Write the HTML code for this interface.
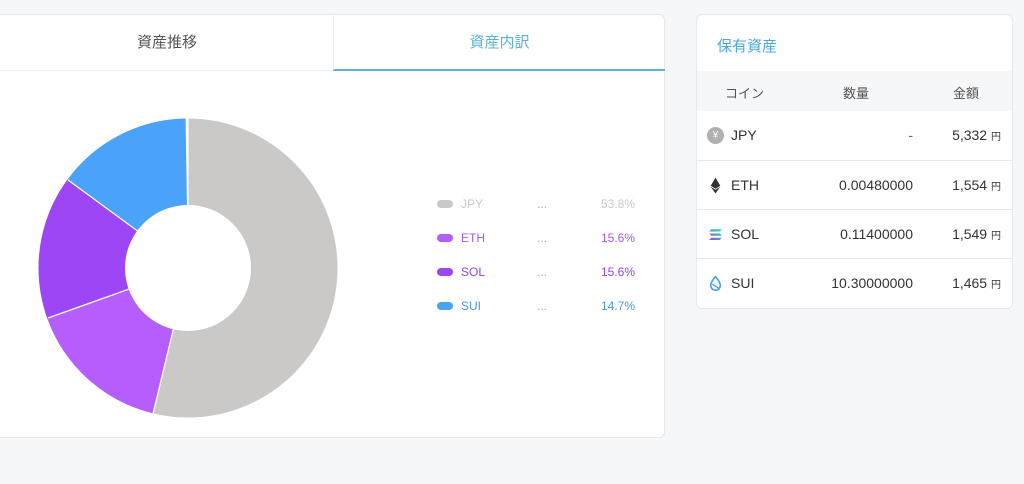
<!DOCTYPE html>
<html><head><meta charset="utf-8"><style>
*{margin:0;padding:0;box-sizing:border-box}
body{width:1024px;height:484px;background:#f6f7f9;font-family:"Liberation Sans","Noto Sans CJK JP",sans-serif;position:relative;overflow:hidden;color:#333}
.card{position:absolute;background:#fff;border:1px solid #e6e8eb;border-radius:6px}
.tab{position:absolute;top:0;height:56px;line-height:56px;text-align:center;font-size:15px}
.leg{position:absolute;left:437px;font-size:12px;width:200px;height:14px;line-height:14px}
.leg i{position:absolute;left:0;top:3px;width:16px;height:8px;border-radius:4px}
.leg .n{position:absolute;left:24px}
.leg .d{position:absolute;left:100px;color:#aaa}
.leg .p{position:absolute;right:2px}
.row{position:absolute;left:0;width:316px;height:50px;border-top:1px solid #e6e8eb;font-size:14px;color:#333}
.row span{position:absolute;top:16px}
.row .c{left:34px}.row .q{right:100px}.row .a{right:12px}
.row .a small{font-size:10px}
.ic{position:absolute;left:10px;top:16px;width:17px;height:17px}
</style></head><body>
<div class="card" style="left:-6px;top:14px;width:671px;height:424px">
 <div class="tab" style="left:6px;width:332px;color:#555;border-bottom:1px solid #eceef0">資産推移</div>
 <div class="tab" style="left:338px;width:332px;color:#5ab3d8;border-left:1px solid #eceef0;border-bottom:2px solid #5ab3d8">資産内訳</div>
</div>
<svg style="position:absolute;left:0;top:0" width="400" height="440">
 <g transform="rotate(-90 188 268)" fill="none" stroke-width="87">
  <circle cx="188" cy="268" r="106" stroke="#cac9c7" stroke-dasharray="358.3 700" stroke-dashoffset="0"/>
  <circle cx="188" cy="268" r="106" stroke="#b65dfd" stroke-dasharray="103.9 700" stroke-dashoffset="-358.3"/>
  <circle cx="188" cy="268" r="106" stroke="#9c46f6" stroke-dasharray="103.9 700" stroke-dashoffset="-462.2"/>
  <circle cx="188" cy="268" r="106" stroke="#4aa3f9" stroke-dasharray="97.9 700" stroke-dashoffset="-566.1"/>
 </g>
 <g stroke="#fff" stroke-width="1.2">
  <line x1="188" y1="268" x2="188" y2="118"/>
  <line x1="188" y1="268" x2="153" y2="414"/>
  <line x1="188" y1="268" x2="48" y2="318"/>
  <line x1="188" y1="268" x2="68" y2="180"/>
 </g>
 <circle cx="188" cy="268" r="63" fill="#fff"/>
</svg>
<div class="leg" style="top:197px;color:#c8c8c8"><i style="background:#cac9c7"></i><span class="n">JPY</span><span class="d">...</span><span class="p">53.8%</span></div>
<div class="leg" style="top:231px;color:#a35de8"><i style="background:#b65dfd"></i><span class="n">ETH</span><span class="d">...</span><span class="p">15.6%</span></div>
<div class="leg" style="top:265px;color:#8f46e0"><i style="background:#9c46f6"></i><span class="n">SOL</span><span class="d">...</span><span class="p">15.6%</span></div>
<div class="leg" style="top:299px;color:#4a96e8"><i style="background:#4aa3f9"></i><span class="n">SUI</span><span class="d">...</span><span class="p">14.7%</span></div>

<div class="card" style="left:696px;top:14px;width:317px;height:295px;overflow:hidden">
 <div style="position:absolute;left:20px;top:20px;font-size:15px;color:#4aa8d8">保有資産</div>
 <div style="position:absolute;left:0;top:56px;width:316px;height:40px;background:#f6f7f8;font-size:13px;color:#555">
  <span style="position:absolute;left:28px;top:12px">コイン</span>
  <span style="position:absolute;left:146px;top:12px">数量</span>
  <span style="position:absolute;left:256px;top:12px">金額</span>
 </div>
 <div class="row" style="top:96px;border-top:none">
  <div class="ic" style="border-radius:50%;background:#b0b0b0;color:#fff;font-size:10px;text-align:center;line-height:17px">¥</div>
  <span class="c">JPY</span><span class="q" style="color:#666">-</span><span class="a">5,332 <small>円</small></span></div>
 <div class="row" style="top:145px">
  <svg class="ic" viewBox="0 0 16 16"><path d="M8 0.5L3.5 8.2 8 11 12.5 8.2Z" fill="#333"/><path d="M8 12L3.5 9.2 8 15.5 12.5 9.2Z" fill="#333"/></svg>
  <span class="c">ETH</span><span class="q">0.00480000</span><span class="a">1,554 <small>円</small></span></div>
 <div class="row" style="top:194px">
  <svg class="ic" viewBox="0 0 16 16"><defs><linearGradient id="g" x1="0" y1="1" x2="1" y2="0"><stop offset="0" stop-color="#9945ff"/><stop offset="1" stop-color="#14f195"/></linearGradient></defs><path d="M4 3h10l-2 2.2H2zM2 7h10l2 2.2H4zM4 11h10l-2 2.2H2z" fill="url(#g)"/></svg>
  <span class="c">SOL</span><span class="q">0.11400000</span><span class="a">1,549 <small>円</small></span></div>
 <div class="row" style="top:243px">
  <svg class="ic" viewBox="0 0 16 16"><path d="M8 1.5C6 4 3.5 6.5 3.5 9.8a4.5 4.5 0 009 0C12.5 6.5 10 4 8 1.5z" fill="none" stroke="#4a9ff0" stroke-width="1.5"/><path d="M5 8.5l6 4" stroke="#4a9ff0" stroke-width="1.3"/></svg>
  <span class="c">SUI</span><span class="q">10.30000000</span><span class="a">1,465 <small>円</small></span></div>
</div>
</body></html>
